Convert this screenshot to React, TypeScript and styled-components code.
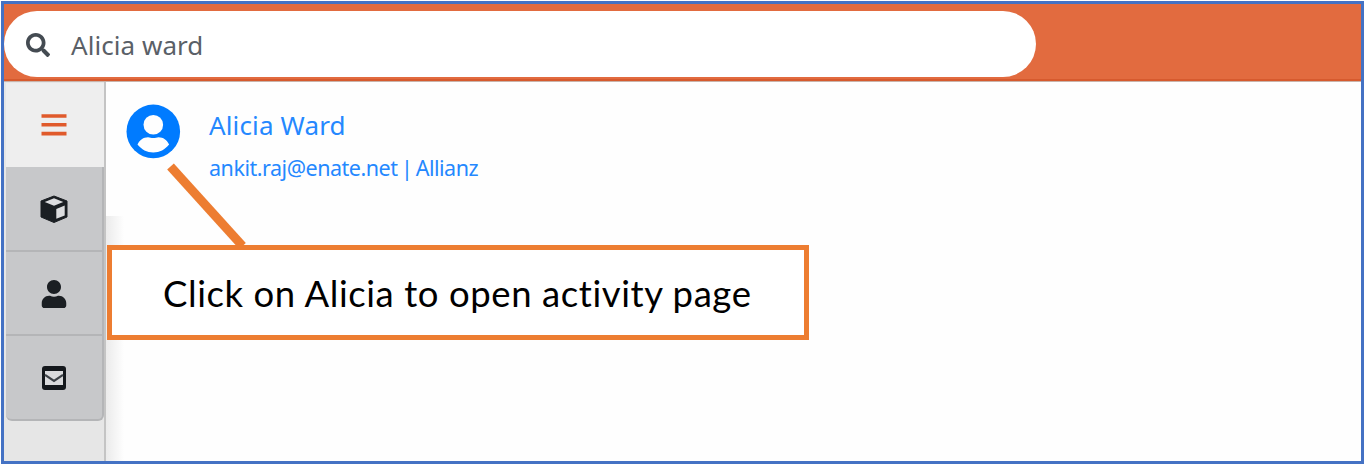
import React from "react";
import styled, { createGlobalStyle } from "styled-components";
import { FaSearch, FaUser } from "react-icons/fa";

const GlobalStyle = createGlobalStyle`
  * { box-sizing: border-box; }
  body { margin: 0; background: #fff; overflow: hidden; }
`;

const Frame = styled.div`
  position: relative;
  display: flex;
  flex-direction: column;
  width: 1363px;
  height: 463px;
  margin: 1px;
  border: 3px solid #4472c4;
  background: #fefefe;
  font-family: "Noto Sans", "Open Sans", sans-serif;
`;

const Header = styled.header`
  flex: none;
  height: 78px;
  padding-top: 7px;
  background: #e26b3f;
  border-bottom: 1px solid #c9b3aa;
  box-shadow: inset 0 -2px 0 #d65a2e;
`;

const SearchBox = styled.div`
  display: flex;
  align-items: center;
  width: 1032px;
  height: 66px;
  padding: 1px 0 0 22px;
  border-radius: 33px;
  background: #fff;
  color: #444b52;
`;

const Query = styled.span`
  margin: 0 0 0 21px;
  font-size: 26px;
  line-height: 34px;
  letter-spacing: 0.05px;
  color: #5a6067;
  white-space: nowrap;
`;

const Body = styled.div`
  flex: 1;
  display: flex;
  min-height: 0;
`;

const Sidebar = styled.nav`
  width: 102px;
  padding: 1px 0 0 2px;
  background: #e6e6e6;
  border-right: 2px solid #c4c4c4;
`;

const Tab = styled.button<{ $active?: boolean; $last?: boolean }>`
  display: flex;
  align-items: center;
  justify-content: center;
  width: 98px;
  height: ${(p) => (p.$active ? 84 : 84.6)}px;
  padding: ${(p) => (p.$active ? "0 2px 0 0" : "2px 0 0 0")};
  border: solid #b4b5b7;
  border-width: ${(p) => (p.$active ? "0" : "0 2px 2px 0")};
  border-radius: ${(p) => (p.$last ? "0 0 6px 6px" : "0")};
  background: ${(p) => (p.$active ? "#eeeeee" : "#c7c8ca")};
  color: ${(p) => (p.$active ? "#e05a2b" : "#1b1f23")};
`;

const Content = styled.main`
  flex: 1;
  display: flex;
  flex-direction: column;
`;

const Result = styled.div`
  display: flex;
  height: 134px;
  padding: 22px 0 0 20px;
  color: #007bff;
`;

const Details = styled.div`
  margin-left: 28px;
  white-space: nowrap;
`;

const Name = styled.div`
  margin-top: 3px;
  font-size: 26px;
  line-height: 36px;
  letter-spacing: 0.15px;
  color: #2488ff;
`;

const Meta = styled.div`
  margin-top: 8px;
  font-size: 21.5px;
  line-height: 34px;
  letter-spacing: -0.48px;
  word-spacing: -1.7px;
  color: #2488ff;
`;

const Shade = styled.div`
  flex: 1;
  width: 18px;
  background: linear-gradient(90deg, #ebebeb, #fefefe);
`;

const Callout = styled.div`
  position: absolute;
  left: 103px;
  top: 241px;
  display: flex;
  align-items: center;
  width: 702px;
  height: 95px;
  padding: 0 0 0 51px;
  border: 5px solid #ed7d31;
  background: #fff;
  color: #000;
  font-family: Lato, sans-serif;
  font-size: 36.5px;
  line-height: 48px;
  letter-spacing: 0.58px;
  font-variant-ligatures: none;
  white-space: nowrap;
`;

const Pointer = styled.svg`
  position: absolute;
  left: 156px;
  top: 156px;
`;

const AvatarIcon = () => (
  <svg width="55" height="55" viewBox="0 0 55 55">
    <circle cx="27.300" cy="27.400" r="26.800" fill="#007bff" />
    <circle cx="27.300" cy="20.700" r="9.800" fill="#fefefe" />
    <path
      d="M11.500 40.500c2-4.500 6-7.300 10.500-7.300 2 0 3 .9 5.300.9s3.300-.9 5.300-.9c4.500 0 8.500 2.800 10.500 7.300-4 5-9.500 8-15.800 8s-11.800-3-15.800-8z"
      fill="#fefefe"
    />
  </svg>
);

const MenuIcon = () => (
  <svg width="26" height="24" viewBox="0 0 26 24" fill="currentColor">
    <path d="M.5 1.200h25v3.600H.5zM.5 10h25v3.600H.5zM.5 18.800h25v3.600H.5z" />
  </svg>
);

const CubeIcon = () => (
  <svg width="28" height="28" viewBox="0 0 28 28">
    <path d="M14 1 27 6v16l-13 5.500L1 22V6z" fill="#1b1f23" stroke="#1b1f23" strokeLinejoin="round" />
    <path d="M14 3.300 23.300 7 14 10.800 4.700 7z" fill="#dcdddf" />
    <path d="M16.300 14 24.700 10.600v9.800l-8.400 3.400z" fill="#dcdddf" />
  </svg>
);

const MailIcon = () => (
  <svg width="26" height="26" viewBox="0 0 26 26">
    <rect x="1" y="1" width="24" height="24" rx="3" fill="#14181c" />
    <path d="M4 6h18v14H4z" fill="#d9dadc" />
    <path d="m4 9.800 9 6.200 9-6.200" fill="none" stroke="#3c4146" strokeWidth="2.200" />
  </svg>
);

export default function App() {
  return (
    <>
      <GlobalStyle />
      <Frame>
        <Header>
          <SearchBox>
            <FaSearch size={24} />
            <Query>Alicia ward</Query>
          </SearchBox>
        </Header>
        <Body>
          <Sidebar>
            <Tab $active aria-label="Menu"><MenuIcon /></Tab>
            <Tab aria-label="Packages"><CubeIcon /></Tab>
            <Tab aria-label="People"><FaUser size={28} /></Tab>
            <Tab $last aria-label="Mail"><MailIcon /></Tab>
          </Sidebar>
          <Content>
            <Result>
              <AvatarIcon />
              <Details>
                <Name>Alicia Ward</Name>
                <Meta>ankit.raj@enate.net | Allianz</Meta>
              </Details>
            </Result>
            <Shade />
          </Content>
        </Body>
        <Pointer width="90" height="90" viewBox="0 0 90 90">
          <path d="M10.500 6.500 82.500 86" stroke="#ed7d31" strokeWidth="9" />
        </Pointer>
        <Callout>Click on Alicia to open activity page</Callout>
      </Frame>
    </>
  );
}
